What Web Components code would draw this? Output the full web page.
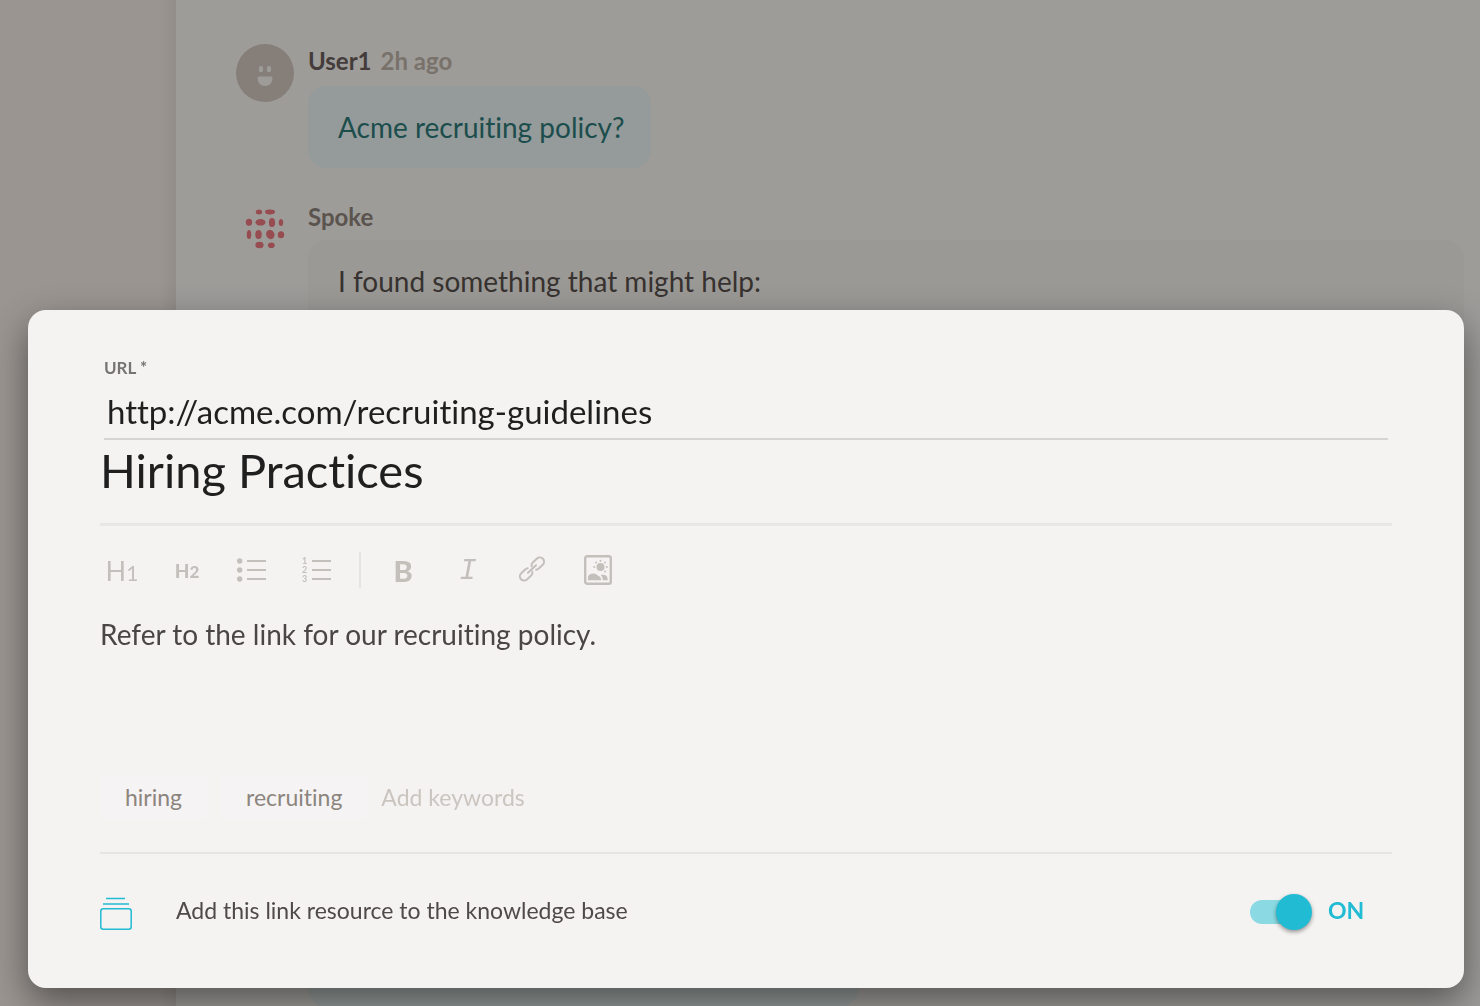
<!DOCTYPE html>
<html lang="en">
<head>
<meta charset="utf-8">
<title>Spoke</title>
<style>
  html, body { height: 100%; margin: 0; }
  body { overflow: hidden; font-family: Lato, "Open Sans", sans-serif; font-variant-ligatures: none; background: #9e9c99; }
</style>
</head>
<body>
<spoke-app></spoke-app>
<script>
const define = (name, html, setup) => {
  const template = document.createElement('template');
  template.innerHTML = html;
  customElements.define(name, class extends HTMLElement {
    constructor() {
      super();
      this.attachShadow({ mode: 'open' }).append(template.content.cloneNode(true));
      if (setup) setup(this.shadowRoot, this);
    }
  });
};

define('chat-message', `
  <style>
    :host { display: grid; grid-template-columns: 58px minmax(0, 1fr); column-gap: 14px; }
    .body { display: flex; flex-direction: column; gap: 8px; align-items: flex-start; }
    header { display: flex; gap: 9px; font-size: 24px; line-height: 34px; font-weight: 700; color: #5b534e; }
    .bubble { box-sizing: border-box; min-height: 82px; padding: 21px 26px 21px 30px; border-radius: 18px;
      font-size: 28px; line-height: 40px; background: #949b9a; color: #1c4d4d; }
    :host([from="bot"]) .body { gap: 6px; }
    :host([from="bot"]) .bubble { align-self: stretch; min-height: 560px; background: #9b9996; color: #37322f; }
    :host([continued]) .bubble { width: 550px; min-height: 175px; }
    :host([continued]) header { display: none; }
    :host([from="user"]) header { color: #443c3b; }
  </style>
  <slot name="avatar"><span></span></slot>
  <div class="body"><header><slot name="name"></slot><slot name="time"></slot></header>
  <div class="bubble"><slot></slot></div></div>`);

define('user-avatar', `
  <style>:host { display: block; height: 58px; } svg { display: block; }</style>
  <svg width="58" height="58" viewBox="0 0 58 58" aria-hidden="true">
    <circle cx="29" cy="29" r="29" fill="#857e79"/>
    <g fill="#9e9c99"><rect x="23" y="22" width="4" height="6" rx="1.5"/><rect x="31" y="22" width="4" height="6" rx="1.5"/>
    <path d="M23 32.5h12q1.500 0 1.500 1.500c0 5-3.500 8-7.500 8s-7.500-3-7.500-8q0-1.500 1.500-1.500z"/></g>
  </svg>`);

define('spoke-logo', `
  <style>:host { display: block; height: 58px; } svg { display: block; }</style>
  <svg width="58" height="58" viewBox="0 0 58 58" fill="#964c50" aria-hidden="true">
    <ellipse cx="23" cy="12" rx="3.200" ry="2.500"/><ellipse cx="34" cy="12" rx="5" ry="2.400"/>
    <ellipse cx="13" cy="22.300" rx="3.200" ry="3.500"/><ellipse cx="24.500" cy="22.300" rx="5" ry="3.300"/>
    <ellipse cx="36" cy="22.500" rx="3.100" ry="4.600"/><ellipse cx="45" cy="22.500" rx="2.200" ry="3.600"/>
    <ellipse cx="13" cy="34.500" rx="2.200" ry="4.600"/><ellipse cx="22.500" cy="34.500" rx="3.200" ry="4.600"/>
    <ellipse cx="34.300" cy="34.500" rx="4.100" ry="4.800" transform="rotate(-25 34.300 34.500)"/><ellipse cx="45" cy="34.700" rx="3.200" ry="3.500"/>
    <ellipse cx="23.500" cy="45" rx="4.100" ry="3.300"/><ellipse cx="35.300" cy="45.200" rx="3.400" ry="2.800"/>
  </svg>`);

define('url-field', `
  <style>
    :host { display: block; margin: 0 4px; border-bottom: 2px solid #d5d4d2; }
    label { display: block; font-size: 17px; line-height: 24px; font-weight: 700; color: #777572; }
    input { box-sizing: border-box; width: 100%; height: 58px; padding: 4px 3px 0; border: 0; outline: 0;
      background: none; font: inherit; font-size: 33px; color: #1f1f1f; display: block; }
  </style>
  <label for="url">URL *</label>
  <input id="url" type="text" value="http://acme.com/recruiting-guidelines">`);

define('title-field', `
  <style>
    :host { display: block; padding-bottom: 23px; border-bottom: 3px solid #e8e7e5; }
    input { display: block; box-sizing: border-box; width: 100%; height: 60px; padding: 0; border: 0; outline: 0;
      background: none; font: inherit; font-size: 47px; color: #1f1f1f; }
  </style>
  <input type="text" aria-label="Title" value="Hiring Practices">`);

define('tool-button', `
  <style>
    :host { display: block; }
    button { display: flex; align-items: center; justify-content: center; width: 44px; height: 44px; padding: 0;
      border: 0; background: none; font: inherit; color: #c3c0bc; }
  </style>
  <button type="button"><slot></slot></button>`,
  (root, host) => root.querySelector('button').setAttribute('aria-label', host.getAttribute('label') || ''));

define('editor-toolbar', `
  <style>
    :host { display: flex; align-items: center; gap: 20px; height: 88px; }
    .group { display: flex; align-items: center; gap: 21px; }
    .rule { width: 2px; height: 36px; background: #e6e4e2; }
    .h1 { font-size: 27px; } .h1 small { font-size: 21px; }
    .h2 { font-size: 19px; font-weight: 900; } .h2 small { font-size: 17px; }
    .b { font-size: 29px; font-weight: 900; }
    .i { font: italic 29px/32px "Liberation Mono", monospace; padding-top: 4px; }
    svg { display: block; overflow: visible; }
    text { font: 700 9px Lato, sans-serif; }
  </style>
  <div class="group">
    <tool-button label="Heading 1"><span class="h1">H<small>1</small></span></tool-button>
    <tool-button label="Heading 2"><span class="h2">H<small>2</small></span></tool-button>
    <tool-button label="Bulleted list"><svg width="30" height="26" viewBox="0 0 30 26" fill="currentColor">
      <circle cx="2.700" cy="4" r="2.700"/><circle cx="2.700" cy="13" r="2.700"/><circle cx="2.700" cy="22" r="2.700"/>
      <path d="M10 3h19v2H10zM10 12h19v2H10zM10 21h19v2H10z"/></svg></tool-button>
    <tool-button label="Numbered list"><svg width="30" height="32" viewBox="0 -3 30 32" fill="currentColor">
      <text x="0" y="7">1</text><text x="0" y="16">2</text><text x="0" y="25">3</text>
      <path d="M10 3h19v2H10zM10 12h19v2H10zM10 21h19v2H10z"/></svg></tool-button>
  </div>
  <span class="rule"></span>
  <div class="group">
    <tool-button label="Bold"><span class="b">B</span></tool-button>
    <tool-button label="Italic"><span class="i">I</span></tool-button>
    <tool-button label="Link"><svg width="28" height="28" viewBox="0 0 28 28" fill="none" stroke="currentColor" stroke-width="2" stroke-linecap="round">
      <g transform="translate(-1 -1) rotate(-43 14 14)"><path d="M11.500 10.500a4 4 0 0 0-2.500-.7H3.200a4.200 4.200 0 0 0 0 8.400H9a4.200 4.200 0 0 0 3.500-2M16.500 17.500a4 4 0 0 0 2.500.7h5.800a4.200 4.200 0 0 0 0-8.400H19a4.200 4.200 0 0 0-3.500 2M8.500 14h11"/></g></svg></tool-button>
    <tool-button label="Image"><svg width="28" height="30" viewBox="0 0 28 30" fill="currentColor">
      <rect x="1.200" y="1.200" width="25.600" height="27.600" rx="2" fill="none" stroke="currentColor" stroke-width="2.400"/>
      <circle cx="16.500" cy="12" r="4"/>
      <g><circle cx="16.500" cy="5.700" r="1"/><circle cx="12" cy="7.500" r="1"/><circle cx="21" cy="7.500" r="1"/><circle cx="22.800" cy="12" r="1"/><circle cx="10.200" cy="12" r="1"/><circle cx="21" cy="16.500" r="1"/></g>
      <path d="M4 25.200v-3.500c1-2.500 3.500-3.500 6-3.200 2.500.3 3.500 2 5.500 3 1.300.8 1.600 2.200 1.600 3.700zM16.800 20.200c3-.9 6-.2 6.800 3V25.200h-4.800c0-2-.5-3.800-2-5z"/></svg></tool-button>
  </div>`);

define('rich-text', `
  <style>
    :host { display: block; }
    textarea { display: block; box-sizing: border-box; width: 100%; height: 148px; padding: 0; border: 0; outline: 0;
      resize: none; background: none; font: inherit; font-size: 28px; line-height: 40px; color: #4a4644; }
  </style>
  <textarea aria-label="Description">Refer to the link for our recruiting policy.</textarea>`);

define('keyword-field', `
  <style>
    :host { display: flex; align-items: center; gap: 14px; height: 70px; padding-bottom: 20px; border-bottom: 2px solid #e6e5e3; }
    button { padding: 0 25px; height: 44px; border: 0; background: #f5f3f3; font: inherit; font-size: 23px; color: #8c857e; border-radius: 4px; }
    input { flex: 1; min-width: 0; height: 44px; padding: 0; border: 0; outline: 0; background: none; font: inherit; font-size: 23px; }
    input::placeholder { color: #cbc5c0; opacity: 1; }
  </style>
  <button type="button">hiring</button>
  <button type="button">recruiting</button>
  <input type="text" placeholder="Add keywords" aria-label="Add keywords">`);

define('knowledge-toggle', `
  <style>
    :host { display: block; padding-bottom: 18px; }
    label { display: flex; align-items: center; height: 116px; }
    svg { display: block; flex: none; margin-right: 44px; }
    .text { flex: 1; padding-bottom: 4px; font-size: 23px; line-height: 32px; color: #4f4a47; }
    .switch { display: grid; align-items: center; flex: none; margin-right: 16px; }
    .switch > * { grid-area: 1 / 1; }
    .track { width: 44px; height: 24px; border-radius: 12px; background: #8bdae3; }
    input { appearance: none; width: 62px; height: 36px; margin: 0; display: flex; justify-content: flex-end; border-radius: 18px; }
    input::after { content: ""; width: 36px; height: 36px; border-radius: 50%; background: #21bbd3; box-shadow: 0 2px 4px rgba(0, 0, 0, .4); }
    .state { flex: none; width: 64px; padding-bottom: 4px; font-size: 23px; line-height: 32px; font-weight: 700; color: #21bbd3; }
  </style>
  <label>
    <svg width="32" height="36" viewBox="0 0 32 36" fill="none" stroke="#21bbd3" stroke-width="1.500" aria-hidden="true">
      <path d="M6 4.500h19M3 10h26"/><rect x=".8" y="14.800" width="30.400" height="20.400" rx="2.500"/></svg>
    <span class="text">Add this link resource to the knowledge base</span>
    <span class="switch"><span class="track"></span><input type="checkbox" role="switch" checked></span>
    <span class="state">ON</span>
  </label>`);

define('resource-dialog', `
  <style>
    :host { display: block; padding: 46px 72px 0; border-radius: 18px; background: #f5f3f2;
      box-shadow: 0 14px 36px rgba(0, 0, 0, .46); }
  </style>
  <url-field></url-field>
  <title-field></title-field>
  <editor-toolbar></editor-toolbar>
  <rich-text></rich-text>
  <keyword-field></keyword-field>
  <knowledge-toggle></knowledge-toggle>`);

define('spoke-app', `
  <style>
    :host { display: grid; grid-template-columns: 176px minmax(0, 1fr); height: 100vh; overflow: hidden; }
    aside { background: linear-gradient(to left, #928d89, #9b9591 16px); }
    main { display: flex; flex-direction: column; gap: 32px; padding: 44px 16px 0 60px; background: #9e9c99; }
    chat-message { flex: none; }
    .time { color: #79726b; }
    .overlay { position: fixed; inset: 0; display: flex; flex-direction: column; justify-content: flex-end; padding: 0 16px 18px 28px; }
  </style>
  <aside></aside>
  <main>
    <chat-message from="user"><user-avatar slot="avatar"></user-avatar><span slot="name">User1</span><span slot="time" class="time">2h ago</span>Acme recruiting policy?</chat-message>
    <chat-message from="bot"><spoke-logo slot="avatar"></spoke-logo><span slot="name">Spoke</span>I found something that might help:</chat-message>
    <chat-message from="user" continued></chat-message>
  </main>
  <div class="overlay"><resource-dialog role="dialog" aria-label="Edit resource"></resource-dialog></div>`);
</script>
</body>
</html>
